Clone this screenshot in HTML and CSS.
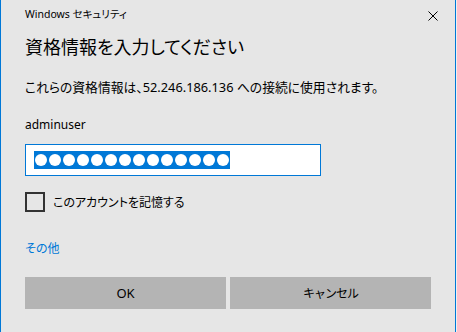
FILE: index.html
```html
<!DOCTYPE html>
<html lang="ja">
<head>
  <meta charset="UTF-8">
  <title>Windows セキュリティ</title>
  <link rel="stylesheet" href="styles.css">
</head>
<body>
  <div class="dialog">
    <div class="titlebar">
      <span class="app-name">Windows セキュリティ</span>
      <svg class="close" width="10" height="10" viewBox="0 0 10 10">
        <path d="M0.5 0.5 L9.5 9.5 M9.5 0.5 L0.5 9.5" stroke="#000" stroke-width="1" fill="none"/>
      </svg>
    </div>
    <h1 class="heading">資格情報を入力してください</h1>
    <p class="desc">これらの資格情報は、52.246.186.136 への接続に使用されます。</p>
    <div class="user">adminuser</div>
    <div class="password">
      <span class="selection">
        <i></i><i></i><i></i><i></i><i></i><i></i><i></i><i></i><i></i><i></i><i></i><i></i><i></i><i></i>
      </span>
    </div>
    <label class="remember">
      <span class="checkbox"></span>
      <span>このアカウントを記憶する</span>
    </label>
    <a class="more" href="#">その他</a>
    <div class="buttons">
      <button>OK</button>
      <button class="cancel">キャンセル</button>
    </div>
  </div>
</body>
</html>
```

FILE: styles.css
```css
body {
  margin: 0;
  background: #f0f0f0;
  font-family: "Noto Sans", "Noto Sans CJK JP", sans-serif;
  font-feature-settings: "palt";
  color: #000;
}
.dialog {
  width: 406px;
  height: 332px;
  padding: 0 24px;
  background: #e6e6e6;
  border-left: 1px solid #0078d7;
  border-right: 1px solid #0078d7;
}
.titlebar {
  display: flex;
  justify-content: space-between;
  align-items: center;
  padding-top: 6px;
  height: 16px;
}
.app-name {
  font-size: 10.5px;
  line-height: 16px;
}
.close {
  margin-right: -7px;
  margin-top: 3px;
}
.heading {
  margin: 11px 0 0;
  font-size: 18px;
  line-height: 28px;
  font-weight: normal;
}
.desc {
  margin: 17px 0 0;
  font-size: 12.8px;
  line-height: 18px;
}
.user {
  margin-top: 20px;
  font-size: 12px;
  line-height: 18px;
}
.password {
  margin-top: 10px;
  width: 286px;
  height: 30px;
  border: 1px solid #0078d7;
  background: #fff;
  display: flex;
  align-items: center;
  padding-left: 8px;
}
.selection {
  display: flex;
  gap: 2px;
  padding: 3px 1px;
  background: #0078d7;
}
.selection i {
  width: 12px;
  height: 12px;
  border-radius: 50%;
  background: #fff;
}
.remember {
  display: flex;
  align-items: center;
  gap: 8px;
  margin-top: 16px;
  font-size: 12px;
}
.checkbox {
  width: 16px;
  height: 16px;
  border: 2px solid #333;
}
.more {
  display: block;
  margin-top: 28px;
  font-size: 12px;
  line-height: 18px;
  color: #0078d7;
  text-decoration: none;
}
.buttons {
  display: flex;
  gap: 4px;
  margin-top: 19px;
}
.buttons button {
  width: 201px;
  height: 32px;
  border: none;
  background: #b4b4b4;
  font-family: inherit;
  font-size: 13px;
  color: #000;
}
.buttons .cancel {
  font-size: 12px;
  letter-spacing: -1px;
}
```
